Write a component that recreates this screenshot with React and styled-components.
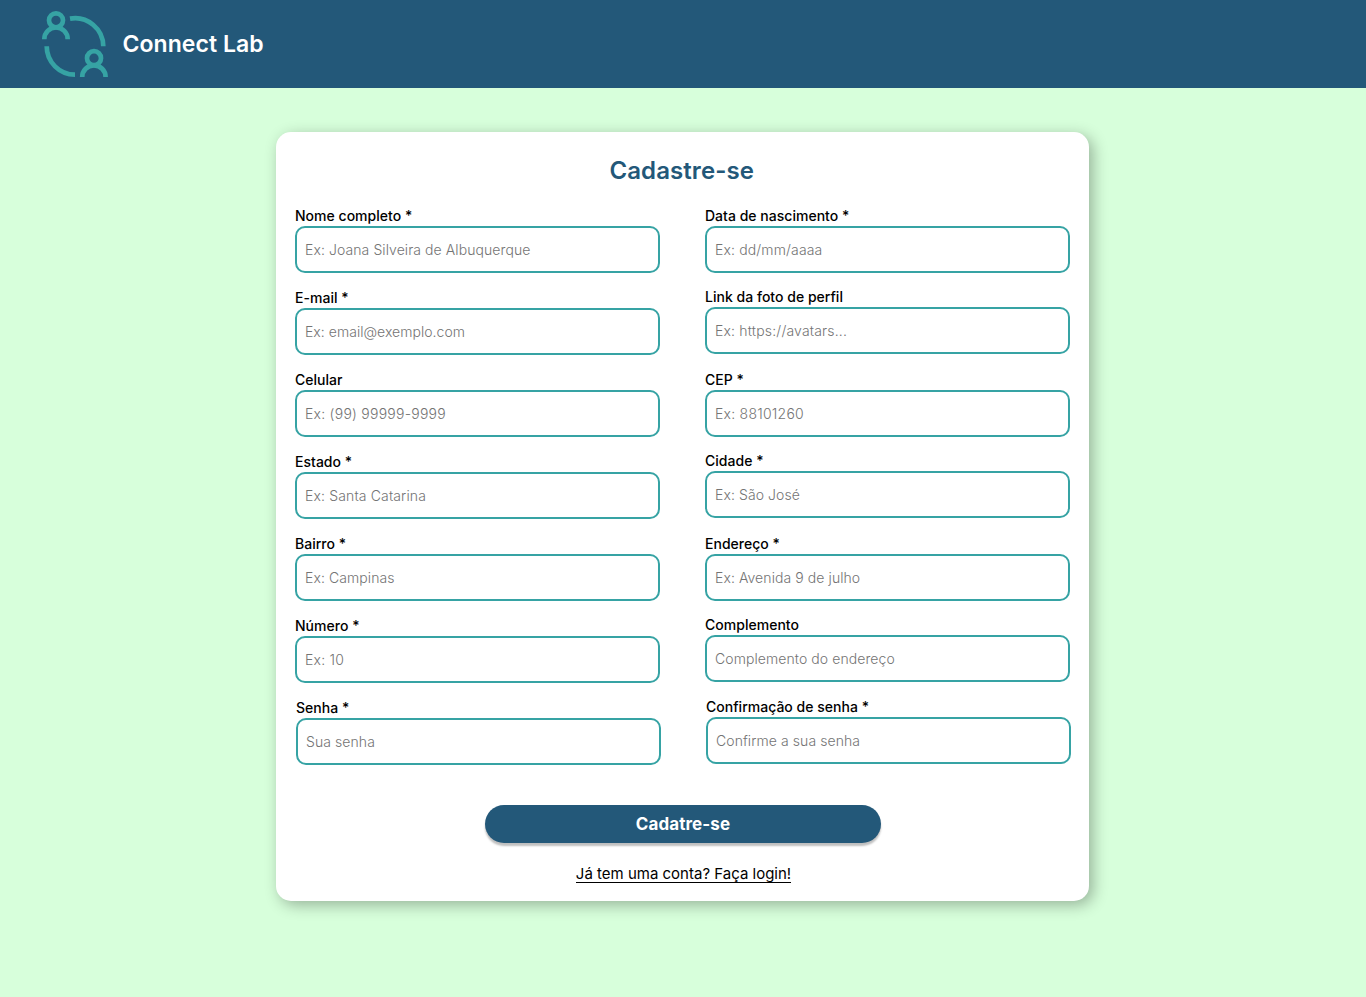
import React from 'react';
import styled, { createGlobalStyle } from 'styled-components';

const GlobalStyle = createGlobalStyle`
  *, *::before, *::after { box-sizing: border-box; }
  body {
    margin: 0;
    background: #d7ffdb;
    font-family: Inter, "Liberation Sans", sans-serif;
    font-optical-sizing: none;
    color: #000;
  }
`;

const Page = styled.div`
  min-height: 997px;
  display: flex;
  flex-direction: column;
  align-items: center;
`;

const Header = styled.header`
  width: 100%;
  height: 88px;
  padding-left: 40px;
  display: flex;
  align-items: center;
  gap: 12.5px;
  background: #235879;
`;

const Logo = styled.svg`
  width: 70px;
  height: 88px;
  fill: none;
  stroke: #36a3a4;
  stroke-width: 4.7;
`;

const Brand = styled.span`
  color: #fff;
  font-size: 23px;
  font-weight: 600;
  line-height: 29px;
  letter-spacing: 0.06px;
`;

const Card = styled.main`
  width: 813px;
  height: 769px;
  margin: 44px 1px 0 0;
  padding: 24px 18px 0 19px;
  display: flex;
  flex-direction: column;
  align-items: center;
  border-radius: 15px;
  background: #fff;
  box-shadow: 4px 4px 15px rgba(0, 0, 0, 0.3);
`;

const Title = styled.h1`
  margin: 0;
  padding-right: 2.5px;
  color: #235879;
  font-size: 24px;
  font-weight: 600;
  line-height: 29px;
  letter-spacing: 0.08px;
`;

const Form = styled.form`
  width: 100%;
  margin-top: 21px;
  display: flex;
  flex-direction: column;
  align-items: center;
`;

const Columns = styled.div`
  width: 100%;
  display: flex;
  gap: 45px;
`;

const Column = styled.div`
  width: 365px;
  display: flex;
  flex-direction: column;
`;

const Field = styled.label`
  width: 365px;
  margin-top: ${({ $space }) => $space}px;
  margin-left: ${({ $indent }) => $indent || 0}px;
  display: flex;
  flex-direction: column;
`;

const FieldName = styled.span`
  height: 20px;
  font-size: 14px;
  font-weight: 500;
  line-height: 20px;
  letter-spacing: 0.02px;
`;

const Input = styled.input`
  width: 100%;
  height: 47px;
  padding: 0 8px;
  border: 2px solid #36a3a4;
  border-radius: 10px;
  background: #fff;
  font: 300 14px Inter, "Liberation Sans", sans-serif;
  letter-spacing: ${({ $tracking = 0.08 }) => $tracking}px;
  outline: none;

  &::placeholder { color: #747474; opacity: 1; }
`;

const SubmitButton = styled.button`
  width: 396px;
  height: 38px;
  margin-top: 40px;
  padding: 0;
  border: 0;
  border-radius: 20px;
  background: #235879;
  color: #fff;
  font: 700 17px/19px Inter, "Liberation Sans", sans-serif;
  font-optical-sizing: none;
  letter-spacing: 0.08px;
  box-shadow: 0 3px 2px rgba(0, 0, 0, 0.25);
`;

const LoginLink = styled.a`
  margin: 22px 0 0 1px;
  color: #000;
  font-size: 15px;
  line-height: 17px;
  border-bottom: 1px solid #000;
`;

const leftFields = [
  { name: 'Nome completo *', hint: 'Ex: Joana Silveira de Albuquerque', space: 0 },
  { name: 'E-mail *', hint: 'Ex: email@exemplo.com', space: 15, tracking: 0.03 },
  { name: 'Celular', hint: 'Ex: (99) 99999-9999', space: 15, tracking: 0.24 },
  { name: 'Estado *', hint: 'Ex: Santa Catarina', space: 15, tracking: 0.14 },
  { name: 'Bairro *', hint: 'Ex: Campinas', space: 15 },
  { name: 'Número *', hint: 'Ex: 10', space: 15, tracking: 0.2 },
  { name: 'Senha *', hint: 'Sua senha', space: 15, indent: 1 },
];

const rightFields = [
  { name: 'Data de nascimento *', hint: 'Ex: dd/mm/aaaa', space: 0, tracking: 0.14 },
  { name: 'Link da foto de perfil', hint: 'Ex: https://avatars...', space: 14, tracking: 0.18 },
  { name: 'CEP *', hint: 'Ex: 88101260', space: 16, tracking: 0.24 },
  { name: 'Cidade *', hint: 'Ex: São José', space: 14 },
  { name: 'Endereço *', hint: 'Ex: Avenida 9 de julho', space: 16 },
  { name: 'Complemento', hint: 'Complemento do endereço', space: 14 },
  { name: 'Confirmação de senha *', hint: 'Confirme a sua senha', space: 15, indent: 1 },
];

const FieldColumn = ({ fields }) => (
  <Column>
    {fields.map((field) => (
      <Field key={field.name} $space={field.space} $indent={field.indent}>
        <FieldName>{field.name}</FieldName>
        <Input placeholder={field.hint} $tracking={field.tracking} />
      </Field>
    ))}
  </Column>
);

export default function App() {
  return (
    <Page>
      <GlobalStyle />
      <Header>
        <Logo viewBox="40 0 70 88" aria-hidden="true">
          <circle cx="56" cy="20.3" r="7" />
          <path d="M44.3 39.2a11.7 11.7 0 0 1 23.4 0" />
          <path d="M70 18.6A28.3 28.3 0 0 1 103.3 46.3" />
          <path d="M46.7 46.3A28.3 28.3 0 0 0 75 74.6" />
          <circle cx="94" cy="58.2" r="7" />
          <path d="M82.2 77a11.7 11.7 0 0 1 23.4 0" />
        </Logo>
        <Brand>Connect Lab</Brand>
      </Header>
      <Card>
        <Title>Cadastre-se</Title>
        <Form>
          <Columns>
            <FieldColumn fields={leftFields} />
            <FieldColumn fields={rightFields} />
          </Columns>
          <SubmitButton type="button">Cadatre-se</SubmitButton>
        </Form>
        <LoginLink>Já tem uma conta? Faça login!</LoginLink>
      </Card>
    </Page>
  );
}
